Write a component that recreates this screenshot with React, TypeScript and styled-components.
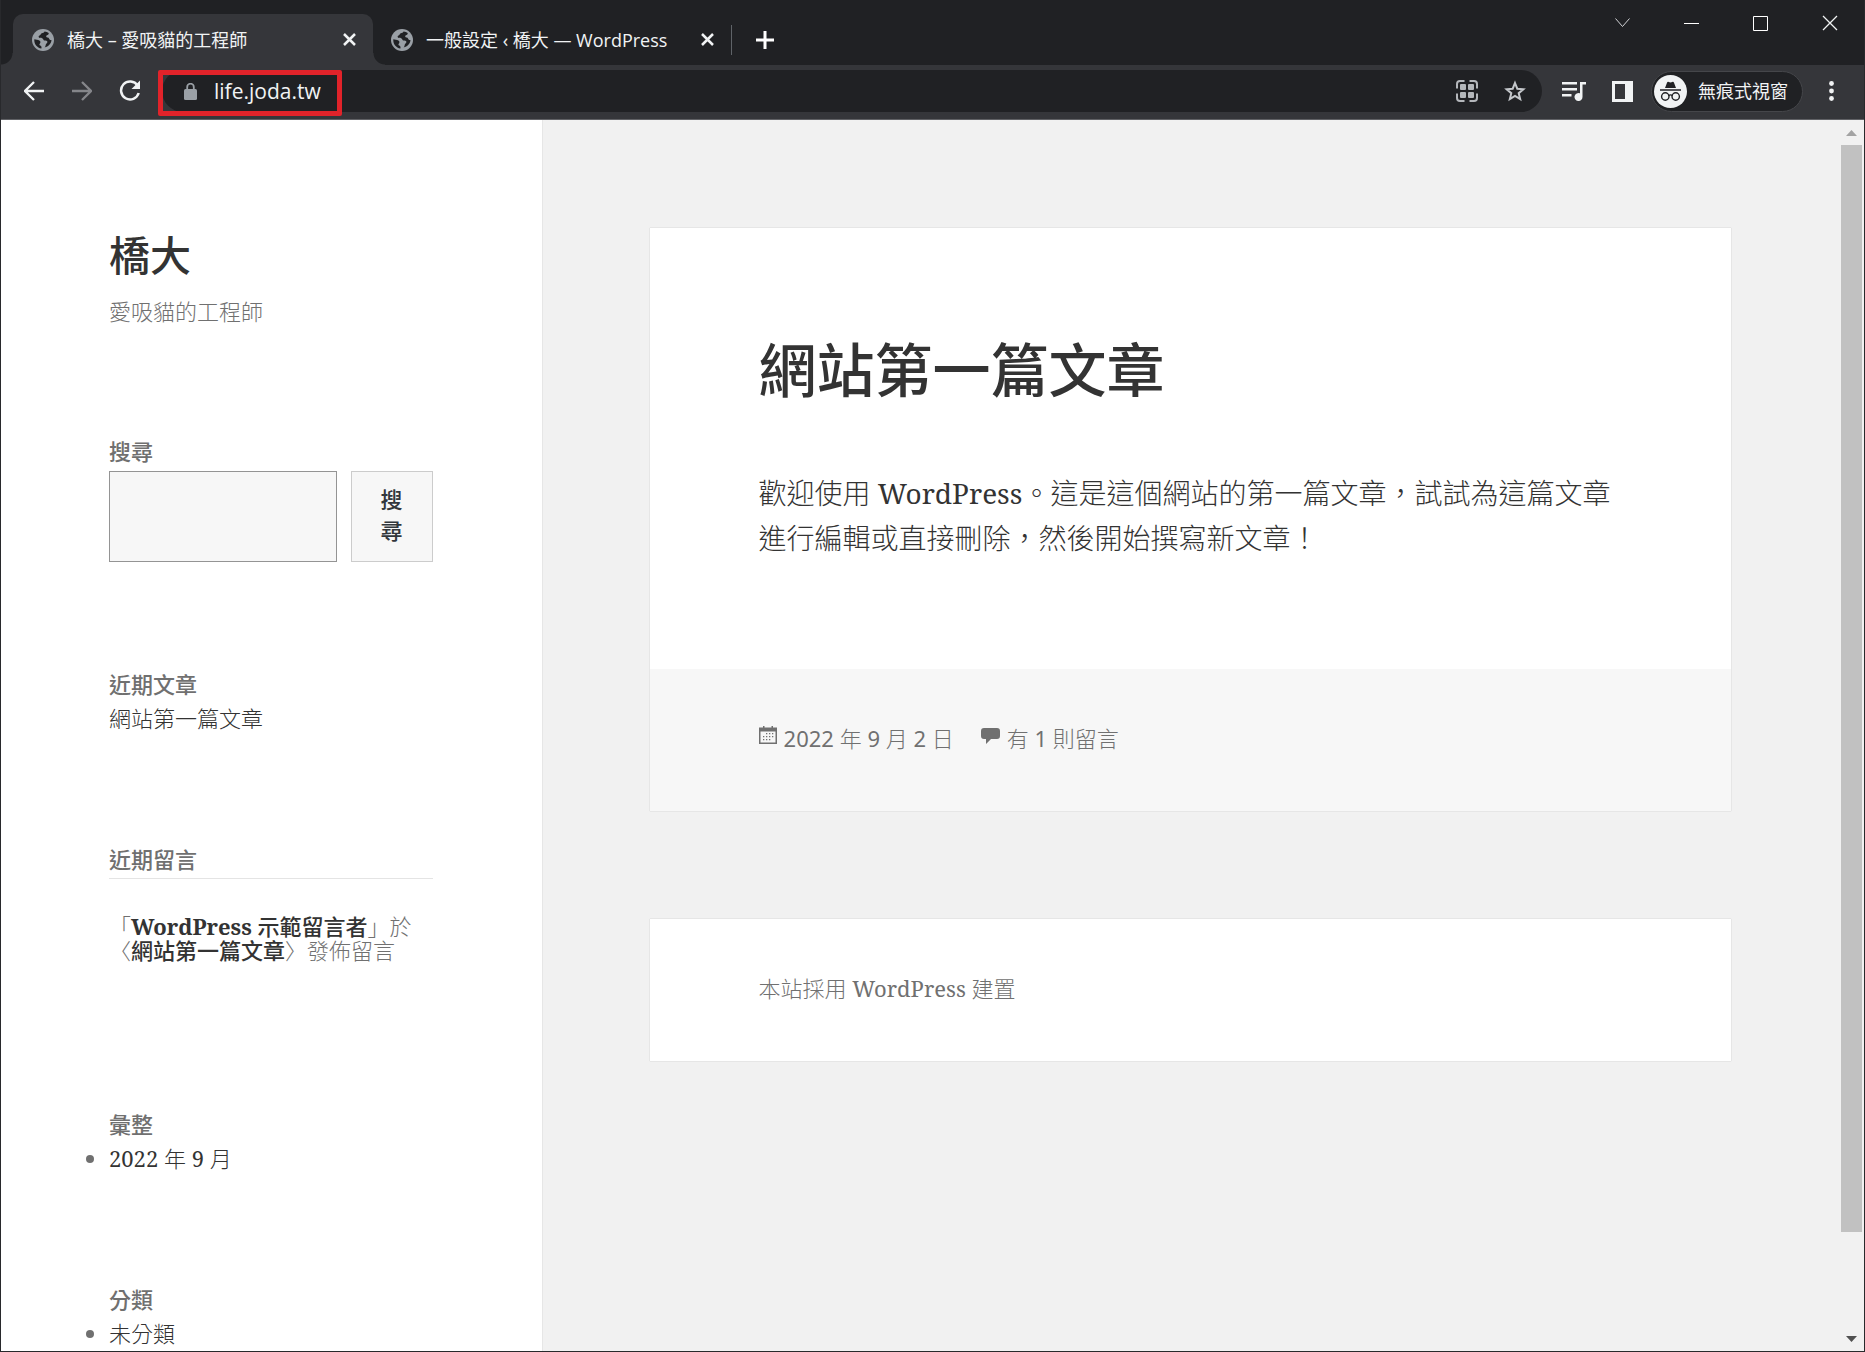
import React from "react";
import styled, { createGlobalStyle, css } from "styled-components";

const ui = `"Open Sans", "Noto Sans CJK TC", sans-serif`;
const serif = `"Noto Serif", "Noto Sans CJK TC", serif`;
const cjk = `"Noto Sans", "Noto Sans CJK TC", sans-serif`;

const GlobalStyle = createGlobalStyle`
  *, *::before, *::after { box-sizing: border-box; }
  body { margin: 0; background: #202124; }
  button, input { font: inherit; color: inherit; border: 0; background: none; padding: 0; margin: 0; border-radius: 0; }
  h1, h2, p, ul { margin: 0; padding: 0; }
  a { color: inherit; text-decoration: none; }
  svg { display: block; flex: none; }
`;

const BrowserWindow = styled.div`
  display: flex;
  flex-direction: column;
  height: 100vh;
  border: 1px solid #28292c;
  border-top: 0;
  overflow: hidden;
`;

/* ---------- tab strip ---------- */

const TabStrip = styled.header`
  display: flex;
  justify-content: space-between;
  height: 65px;
  padding-left: 12px;
  background: #202124;
  color: #f1f3f4;
  font: 400 18px/26px ${ui};
`;

const TabList = styled.div`
  display: flex;
  align-items: center;
  padding-top: 14px;
`;

const Tab = styled.div<{ $active?: boolean }>`
  position: relative;
  display: flex;
  align-items: center;
  gap: 13px;
  width: ${(p) => (p.$active ? 360 : 358)}px;
  height: 51px;
  padding: 0 17px 0 ${(p) => (p.$active ? 19 : 18)}px;
  white-space: nowrap;
  ${(p) =>
    p.$active &&
    css`
      background: #35363a;
      border-radius: 10px 10px 0 0;
      &::before,
      &::after {
        content: "";
        position: absolute;
        bottom: 0;
        width: 12px;
        height: 12px;
      }
      &::before {
        right: 100%;
        background: radial-gradient(circle at 0 0, transparent 11px, #35363a 12px);
      }
      &::after {
        left: 100%;
        background: radial-gradient(circle at 100% 0, transparent 11px, #35363a 12px);
      }
    `}
`;

const TabTitle = styled.span`
  flex: 1;
`;

const IconButton = styled.button<{ $w: number; $h?: number }>`
  display: flex;
  flex: none;
  align-items: center;
  justify-content: center;
  width: ${(p) => p.$w}px;
  height: ${(p) => p.$h ?? p.$w}px;
`;

const TabDivider = styled.span`
  width: 1px;
  height: 30px;
  background: #5f6368;
`;

const NewTab = styled(IconButton)`
  margin-left: 18px;
`;

const WindowControls = styled.div`
  display: flex;
`;

/* ---------- toolbar ---------- */

const Toolbar = styled.div`
  display: flex;
  align-items: center;
  height: 55px;
  padding: 0 9px 2px;
  border-bottom: 1px solid #606165;
  background: #35363a;
  color: #f1f3f4;
  font: 400 18px/26px ${ui};
`;

const AddressBar = styled.div`
  position: relative;
  display: flex;
  flex: 1;
  align-items: center;
  height: 42px;
  margin-left: 8px;
  padding: 0 3px 0 22px;
  border-radius: 21px;
  background: #202124;
`;

const AddressInput = styled.input`
  flex: 1;
  min-width: 0;
  margin-left: 17px;
  outline: 0;
  font-size: 21px;
  line-height: 30px;
`;

const Highlight = styled.span`
  position: absolute;
  top: 0;
  left: -4px;
  width: 184px;
  height: 46px;
  border: 5px solid #e1232a;
  border-radius: 2px;
  pointer-events: none;
`;

const ToolbarActions = styled.div`
  display: flex;
  align-items: center;
  margin-left: 8px;
`;

const Incognito = styled.button`
  display: flex;
  align-items: center;
  gap: 11px;
  height: 41px;
  margin: 0 4px 0 5px;
  padding: 0 14px 0 2px;
  border: 1px solid #45464a;
  border-radius: 21px;
  background: #202124;
`;

/* ---------- web page ---------- */

const Viewport = styled.div`
  display: flex;
  flex: 1;
  min-height: 0;
  background: #f1f1f1;
`;

const Page = styled.div`
  display: flex;
  flex: 1;
  min-width: 0;
  overflow: hidden;
  font: 300 22px/34px ${serif};
  color: #707070;
`;

const Sidebar = styled.aside`
  flex: none;
  width: 29.4118%;
  padding: 0 109px 0 108px;
  background: #fff;
  box-shadow: 0 0 1px rgba(0, 0, 0, 0.25);
`;

const SiteHeader = styled.div`
  padding-top: 110px;
`;

const SiteTitle = styled.h1`
  margin-bottom: 14px;
  color: #333;
  font: 500 41px/50px ${cjk};
`;

const Tagline = styled.p`
  padding-bottom: 1px;
`;

const Widget = styled.section`
  margin-top: 107px;
`;

const headingText = css`
  padding-bottom: 4px;
  font: 500 22px/30px ${cjk};
`;

const WidgetTitle = styled.h2<{ $ruled?: boolean }>`
  ${headingText}
  ${(p) => p.$ruled && "border-bottom: 1px solid #e4e4e4;"}
`;

const WidgetLabel = styled.label`
  display: block;
  ${headingText}
`;

const SearchRow = styled.div`
  display: flex;
  gap: 14px;
  height: 91px;
  margin-top: 1px;
`;

const SearchInput = styled.input`
  flex: 1;
  min-width: 0;
  padding: 0 16px;
  border: 1px solid #949494;
  background: #f7f7f7;
`;

const SearchButton = styled.button`
  width: 82px;
  padding: 0 29px 3px;
  border: 1px solid #ccc;
  background: #f7f7f7;
  color: #32373c;
  font: 500 22px/31px ${cjk};
`;

const LinkList = styled.ul<{ $bullets?: boolean }>`
  list-style: ${(p) => (p.$bullets ? "disc" : "none")};
  padding-bottom: 4px;
  line-height: 30px;
  a {
    color: #333;
  }
`;

const Comment = styled.p`
  margin: 35px 0 147px;
  line-height: 24px;
  a {
    color: #333;
    font-weight: 500;
  }
`;

const Latin = styled.span<{ $bold?: boolean }>`
  font-weight: ${(p) => (p.$bold ? 700 : 400)};
`;

const Content = styled.main`
  display: flex;
  flex: 1;
  flex-direction: column;
  gap: 108px;
  min-width: 0;
  padding: 108px;
`;

const Card = styled.article`
  background: #fff;
  box-shadow: 0 0 1px rgba(0, 0, 0, 0.25);
`;

const CardBody = styled.div`
  padding: 108px 109px;
`;

const PostTitle = styled.h2`
  margin-bottom: 67px;
  color: #333;
  font: 500 58px/68px ${cjk};
`;

const PostText = styled.p`
  color: #333;
  font-size: 28px;
  line-height: 45px;
`;

const CardFooter = styled.footer<{ $tinted?: boolean }>`
  display: flex;
  gap: 27px;
  padding: 52px 109px 56px;
  background: ${(p) => (p.$tinted ? "#f7f7f7" : "#fff")};
`;

const MetaLink = styled.a`
  display: flex;
  gap: 7px;
  font-family: ${cjk};
  svg {
    margin-top: 5px;
  }
`;

/* ---------- scroll bar ---------- */

const ScrollBar = styled.div`
  display: flex;
  flex: none;
  flex-direction: column;
  align-items: center;
  width: 25px;
`;

const ScrollTrack = styled.div`
  flex: 1;
  width: 21px;
`;

const ScrollThumb = styled.div`
  height: 92%;
  background: #c1c1c1;
`;

const Globe = () => (
  <svg width="22" height="22" viewBox="0 0 22 22">
    <circle cx="11" cy="11" r="11" fill="#9aa0a6" />
    <path
      d="M12.6 2.4c-.6 1.3-1.600 1.500-2.800 1.900-1.300.5-1 1.800-2.200 2.300-.9.400-1.300 1.200-.6 2 .9.900 2.400.2 3.500.8 1 .6.800 1.900 2 2.200 1.200.3 2.600-.1 2.900 1.200.2 1.300-1.200 1.500-1.600 2.600-.3 1-.1 2.200-1.200 3 3.900-.8 6.500-3.600 6.900-7.400-1.500.3-2.200-.5-2.500-1.500-.4-1.200-1.900-.6-2.600-1.400-.6-.8.2-1.700 1.100-2 .9-.4 1.300-1 1.200-2-1.100-.9-2.500-1.500-4.100-1.700z"
      fill="#202124"
    />
    <path d="M2.300 10.200c1.600.5 3.800.5 5 1.300 1.200.7 1.500 2 .6 2.900-.7.700-.6 1.700.4 2.100 1 .4 1.500 1.500 1.100 3.100-4.200-.8-7.500-4.500-7.100-9.400z" fill="#202124" />
  </svg>
);

const Cross = ({ size, width }: { size: number; width: number }) => (
  <svg width={size} height={size} viewBox={`0 0 ${size} ${size}`} stroke="currentColor" strokeWidth={width}>
    <path d={`M1 1L${size - 1} ${size - 1}M${size - 1} 1L1 ${size - 1}`} />
  </svg>
);

const Arrow = ({ forward }: { forward?: boolean }) => (
  <svg width="20" height="20" viewBox="0 0 20 20" fill="none" stroke={forward ? "#85868a" : "#f1f3f4"} strokeWidth="2.300">
    {forward ? <path d="M0 10H18M10 1L19 10L10 19" /> : <path d="M20 10H2M10 1L1 10L10 19" />}
  </svg>
);

const Reload = () => (
  <svg width="22" height="22" viewBox="0 0 22 22" fill="none">
    <path d="M18.600 5.500A9 9 0 1 0 19.700 13" stroke="#f1f3f4" strokeWidth="2.500" />
    <path d="M21 0.500V9H12.500Z" fill="#f1f3f4" />
  </svg>
);

const Lock = () => (
  <svg width="13" height="17" viewBox="0 0 13 17">
    <rect y="6" width="13" height="11" rx="1.500" fill="#9aa0a6" />
    <path d="M3.200 7V4a3.300 3.300 0 0 1 6.600 0V7" fill="none" stroke="#9aa0a6" strokeWidth="1.800" />
  </svg>
);

const Grid = () => (
  <svg width="22" height="22" viewBox="0 0 22 22" fill="none" stroke="#b4b7bb" strokeWidth="2">
    <path d="M1 8.500V4a3 3 0 0 1 3-3h4.500M13.500 1H18a3 3 0 0 1 3 3v4.500M21 13.500V18a3 3 0 0 1-3 3h-4.500M8.500 21H4a3 3 0 0 1-3-3v-4.500" />
    <g fill="#b4b7bb" stroke="none">
      <rect x="4" y="4" width="6" height="6" rx="1" />
      <rect x="12" y="4" width="6" height="6" rx="1" />
      <rect x="4" y="12" width="6" height="6" rx="1" />
      <rect x="12" y="12" width="6" height="6" rx="1" />
    </g>
  </svg>
);

const Star = () => (
  <svg width="22" height="22" viewBox="0 0 22 22" fill="none" stroke="#c4c7cb" strokeWidth="2">
    <path d="M11 3l2.300 5.700 6.100.5-4.700 4 1.500 6L11 16l-5.200 3.200 1.500-6-4.700-4 6.100-.5z" />
  </svg>
);

const Playlist = () => (
  <svg width="24" height="19" viewBox="0 0 24 19" fill="#f1f3f4">
    <path d="M0 0h15v2.400H0zM0 6h15v2.400H0zM0 12h9.500v2.400H0zM18 0h6v2.400h-3.500V15a4 4 0 1 1-2.500-3.700z" />
  </svg>
);

const SidePanel = () => (
  <svg width="21" height="21" viewBox="0 0 21 21">
    <path d="M0 0h21v21H0zM3 3v15h10V3z" fill="#f1f3f4" fillRule="evenodd" />
  </svg>
);

const Spy = () => (
  <svg width="33" height="33" viewBox="0 0 33 33">
    <circle cx="16.500" cy="16.500" r="16.500" fill="#f1f3f4" />
    <path d="M11 13l2-5.300c.3-.9 1-1 1.700-.7 1.200.5 2.400.5 3.600 0 .7-.3 1.400-.2 1.700.7L22 13z" fill="#202124" />
    <path d="M6 15h21M14.500 20.600c1.200-.9 2.800-.9 4 0" stroke="#202124" strokeWidth="1.400" fill="none" />
    <circle cx="11.300" cy="21.500" r="3.700" fill="none" stroke="#202124" strokeWidth="1.400" />
    <circle cx="21.700" cy="21.500" r="3.700" fill="none" stroke="#202124" strokeWidth="1.400" />
  </svg>
);

const Dots = () => (
  <svg width="5" height="20" viewBox="0 0 5 20" fill="#f1f3f4">
    <circle cx="2.500" cy="2.500" r="2.400" />
    <circle cx="2.500" cy="10" r="2.400" />
    <circle cx="2.500" cy="17.500" r="2.400" />
  </svg>
);

const Calendar = () => (
  <svg width="18" height="18" viewBox="0 0 18 18" fill="#707070">
    <path d="M4 0h1.500v1.500h7V0H14v1.500h4V18H0V1.500h4zM1.500 5.500v11h15v-11z" fillRule="evenodd" />
    <path d="M7 7h1.300v1.300H7zM10 7h1.300v1.300H10zM13 7h1.300v1.300H13zM4 10h1.300v1.300H4zM7 10h1.300v1.300H7zM10 10h1.300v1.300H10zM13 10h1.300v1.300H13zM4 13h1.300v1.300H4zM7 13h1.300v1.300H7zM10 13h1.300v1.300H10z" />
  </svg>
);

const Bubble = () => (
  <svg width="19" height="18" viewBox="0 0 19 18" fill="#707070">
    <path d="M3 2h13a3 3 0 0 1 3 3v5a3 3 0 0 1-3 3h-6l-5 5v-5H3a3 3 0 0 1-3-3V5a3 3 0 0 1 3-3z" />
  </svg>
);

const Triangle = ({ down }: { down?: boolean }) => (
  <svg width="11" height="6" viewBox="0 0 11 6">
    <path d={down ? "M0 0h11L5.500 6z" : "M0 6h11L5.500 0z"} fill={down ? "#505050" : "#a3a3a3"} />
  </svg>
);

export default function App() {
  return (
    <BrowserWindow lang="zh-Hant-TW">
      <GlobalStyle />
      <TabStrip>
        <TabList role="tablist">
          <Tab $active role="tab" aria-selected="true">
            <Globe />
            <TabTitle>橋大 – 愛吸貓的工程師</TabTitle>
            <IconButton $w={14} aria-label="關閉分頁">
              <Cross size={13} width={2.5} />
            </IconButton>
          </Tab>
          <Tab role="tab" aria-selected="false">
            <Globe />
            <TabTitle>一般設定 ‹ 橋大 — WordPress</TabTitle>
            <IconButton $w={14} aria-label="關閉分頁">
              <Cross size={13} width={2.5} />
            </IconButton>
          </Tab>
          <TabDivider />
          <NewTab $w={30} aria-label="新增分頁">
            <svg width="18" height="18" viewBox="0 0 18 18" stroke="#fff" strokeWidth="3">
              <path d="M9 0v18M0 9h18" />
            </svg>
          </NewTab>
        </TabList>
        <WindowControls>
          <IconButton $w={69} $h={46} aria-label="搜尋分頁">
            <svg width="15" height="10" viewBox="0 0 15 10" fill="none" stroke="#d0d2d5">
              <path d="M0.500 0.500l7 8 7-8" />
            </svg>
          </IconButton>
          <IconButton $w={69} $h={46} aria-label="最小化">
            <svg width="15" height="1" viewBox="0 0 15 1">
              <path d="M0 0h15v1H0z" fill="#fff" />
            </svg>
          </IconButton>
          <IconButton $w={69} $h={46} aria-label="最大化">
            <svg width="15" height="15" viewBox="0 0 15 15" fill="none" stroke="#fff">
              <path d="M0.500 0.500h14v14h-14z" />
            </svg>
          </IconButton>
          <IconButton $w={69} $h={46} aria-label="關閉">
            <Cross size={16} width={1.3} />
          </IconButton>
        </WindowControls>
      </TabStrip>

      <Toolbar>
        <IconButton $w={48} $h={42} aria-label="上一頁">
          <Arrow />
        </IconButton>
        <IconButton $w={48} $h={42} aria-label="下一頁">
          <Arrow forward />
        </IconButton>
        <IconButton $w={48} $h={42} aria-label="重新載入">
          <Reload />
        </IconButton>
        <AddressBar>
          <Lock />
          <AddressInput type="text" aria-label="網址" defaultValue="life.joda.tw" />
          <IconButton $w={48} $h={42} aria-label="QR 圖碼">
            <Grid />
          </IconButton>
          <IconButton $w={48} $h={42} aria-label="加入書籤">
            <Star />
          </IconButton>
          <Highlight />
        </AddressBar>
        <ToolbarActions>
          <IconButton $w={48} $h={42} aria-label="媒體控制">
            <Playlist />
          </IconButton>
          <IconButton $w={48} $h={42} aria-label="側邊面板">
            <SidePanel />
          </IconButton>
          <Incognito>
            <Spy />
            無痕式視窗
          </Incognito>
          <IconButton $w={48} $h={42} aria-label="選單">
            <Dots />
          </IconButton>
        </ToolbarActions>
      </Toolbar>

      <Viewport>
        <Page>
          <Sidebar>
            <SiteHeader>
              <SiteTitle>
                <a href="#home">橋大</a>
              </SiteTitle>
              <Tagline>愛吸貓的工程師</Tagline>
            </SiteHeader>

            <Widget>
              <WidgetLabel htmlFor="search">搜尋</WidgetLabel>
              <SearchRow>
                <SearchInput id="search" type="search" />
                <SearchButton type="submit">搜尋</SearchButton>
              </SearchRow>
            </Widget>

            <Widget>
              <WidgetTitle>近期文章</WidgetTitle>
              <LinkList>
                <li>
                  <a href="#post">網站第一篇文章</a>
                </li>
              </LinkList>
            </Widget>

            <Widget>
              <WidgetTitle $ruled>近期留言</WidgetTitle>
              <Comment>
                「
                <a href="#author">
                  <Latin $bold>WordPress</Latin> 示範留言者
                </a>
                」於〈<a href="#post">網站第一篇文章</a>〉發佈留言
              </Comment>
            </Widget>

            <Widget>
              <WidgetTitle>彙整</WidgetTitle>
              <LinkList $bullets>
                <li>
                  <a href="#archive">
                    <Latin>2022</Latin> 年 <Latin>9</Latin> 月
                  </a>
                </li>
              </LinkList>
            </Widget>

            <Widget>
              <WidgetTitle>分類</WidgetTitle>
              <LinkList $bullets>
                <li>
                  <a href="#category">未分類</a>
                </li>
              </LinkList>
            </Widget>
          </Sidebar>

          <Content>
            <Card>
              <CardBody>
                <PostTitle>
                  <a href="#post">網站第一篇文章</a>
                </PostTitle>
                <PostText>
                  歡迎使用 <Latin>WordPress</Latin>。這是這個網站的第一篇文章，試試為這篇文章進行編輯或直接刪除，然後開始撰寫新文章！
                </PostText>
              </CardBody>
              <CardFooter $tinted>
                <MetaLink href="#date">
                  <Calendar />
                  <span>
                    <Latin>2022</Latin> 年 <Latin>9</Latin> 月 <Latin>2</Latin> 日
                  </span>
                </MetaLink>
                <MetaLink href="#comments">
                  <Bubble />
                  <span>
                    有 <Latin>1</Latin> 則留言
                  </span>
                </MetaLink>
              </CardFooter>
            </Card>
            <Card as="div">
              <CardFooter>
                <a href="#wordpress">
                  本站採用 <Latin>WordPress</Latin> 建置
                </a>
              </CardFooter>
            </Card>
          </Content>
        </Page>
        <ScrollBar aria-hidden="true">
          <IconButton $w={25} tabIndex={-1}>
            <Triangle />
          </IconButton>
          <ScrollTrack>
            <ScrollThumb />
          </ScrollTrack>
          <IconButton $w={25} tabIndex={-1}>
            <Triangle down />
          </IconButton>
        </ScrollBar>
      </Viewport>
    </BrowserWindow>
  );
}
